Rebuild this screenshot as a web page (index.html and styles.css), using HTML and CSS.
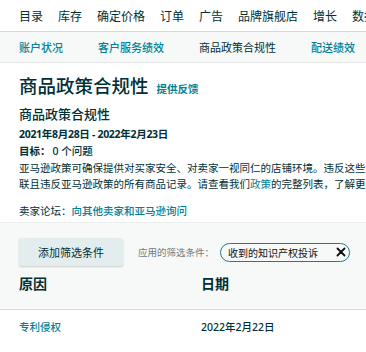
FILE: index.html
```html
<!DOCTYPE html>
<html lang="zh-CN">
<head>
  <meta charset="UTF-8">
  <meta name="viewport" content="width=device-width, initial-scale=1.0">
  <title>商品政策合规性</title>
  <link rel="stylesheet" href="styles.css">
</head>
<body>
  <header class="topnav">
    <a>目录</a>
    <a>库存</a>
    <a>确定价格</a>
    <a>订单</a>
    <a>广告</a>
    <a>品牌旗舰店</a>
    <a>增长</a>
    <a>数据报告</a>
    <a>绩效</a>
  </header>

  <nav class="subnav">
    <a class="link">账户状况</a>
    <a class="link">客户服务绩效</a>
    <a class="current">商品政策合规性</a>
    <a class="link">配送绩效</a>
  </nav>

  <main class="intro">
    <h1>商品政策合规性<a class="feedback">提供反馈</a></h1>
    <h2>商品政策合规性</h2>
    <p class="date">2021年8月28日 - 2022年2月23日</p>
    <p class="goal"><strong>目标：</strong>0 个问题</p>
    <p class="desc">亚马逊政策可确保提供对买家安全、对卖家一视同仁的店铺环境。违反这些政策可能会导致您的账户被停用。下面列出了所有与您的账户关联且违反亚马逊政策的所有商品记录。请查看我们<a class="link">政策</a>的完整列表，了解更多信息。</p>
    <p class="forum">卖家论坛：<a class="link">向其他卖家和亚马逊询问</a></p>
  </main>

  <section class="filters">
    <div class="toolbar">
      <button class="add-filter">添加筛选条件</button>
      <span class="applied">应用的筛选条件：</span>
      <span class="pill">收到的知识产权投诉
        <svg width="10" height="10" viewBox="0 0 10 10"><path d="M1.5 1.5 L8.5 8.5 M8.5 1.5 L1.5 8.5" stroke="#0f1111" stroke-width="1.8" stroke-linecap="round"/></svg>
      </span>
    </div>
    <div class="cols head">
      <span>原因</span>
      <span>日期</span>
    </div>
  </section>

  <div class="cols row">
    <a class="link">专利侵权</a>
    <span>2022年2月22日</span>
  </div>
</body>
</html>
```

FILE: styles.css
```css
html {
  overflow: hidden;
}
body {
  margin: 0;
  min-width: 1000px;
  font-family: "Noto Sans", "Noto Sans CJK SC", sans-serif;
  color: #002f36;
  background: white;
}
a {
  text-decoration: none;
}
.link {
  color: #008296;
}
.topnav {
  height: 31px;
  display: flex;
  align-items: center;
  gap: 15px;
  padding: 0 19px;
  font-size: 12px;
  border-bottom: 1px solid #d5d9d9;
}
.topnav a {
  color: #002f36;
}
.subnav {
  height: 30px;
  display: flex;
  align-items: center;
  gap: 35px;
  padding: 0 19px;
  font-size: 11px;
  background-color: #f7f8f8;
  border-bottom: 1px solid #e6e8e8;
}
.subnav .link {
  font-weight: 500;
}
.subnav .current {
  color: #002f36;
}
.intro {
  padding: 11px 19px 3px;
}
h1 {
  margin: 0;
  font-size: 18.5px;
  line-height: 24px;
  font-weight: 500;
}
.feedback {
  font-size: 10.5px;
  font-weight: 600;
  color: #008296;
  margin-left: 8px;
}
h2 {
  margin: 4px 0 0;
  font-size: 13px;
  line-height: 18px;
  font-weight: 500;
}
.intro p {
  margin: 0;
  font-size: 10.5px;
  line-height: 16px;
}
.date {
  margin-top: 3px !important;
  font-weight: 700;
  letter-spacing: -0.3px;
}
.goal {
  margin-top: 1px !important;
  font-weight: 500;
}
.goal strong {
  font-weight: 700;
  margin-right: 2px;
}
.desc {
  margin-top: 1px !important;
  width: 650px;
}
.forum {
  margin-top: 11px !important;
}
.forum .link {
  font-weight: 500;
}
.filters {
  background-color: #f7f8f8;
  border-top: 1px solid #eceeee;
  border-bottom: 1px solid #d5d9d9;
  padding: 15px 19px 15px;
}
.toolbar {
  display: flex;
  align-items: center;
}
.add-filter {
  width: 104px;
  height: 28px;
  border: none;
  border-radius: 2px;
  background-color: #e3eded;
  box-shadow: 0 1px 2px rgba(0, 0, 0, 0.18);
  font-family: inherit;
  font-size: 11px;
  color: #002f36;
  padding: 0;
}
.applied {
  margin-left: 15px;
  font-size: 9.5px;
  color: #6f7b7c;
}
.pill {
  margin-left: 6px;
  width: 130px;
  height: 19px;
  box-sizing: border-box;
  border: 1.5px solid #1c7d8c;
  border-radius: 10px;
  display: flex;
  align-items: center;
  justify-content: space-between;
  padding: 0 3px 0 7px;
  font-size: 10px;
  color: #0f1111;
}
.cols {
  display: grid;
  grid-template-columns: 182px 1fr;
}
.head {
  margin-top: 8px;
  font-size: 14px;
  line-height: 20px;
  font-weight: 700;
}
.row {
  padding: 9px 19px;
  font-size: 10.5px;
  line-height: 16px;
}
.row .link {
  font-weight: 500;
}
.row span {
  font-weight: 500;
}
```
